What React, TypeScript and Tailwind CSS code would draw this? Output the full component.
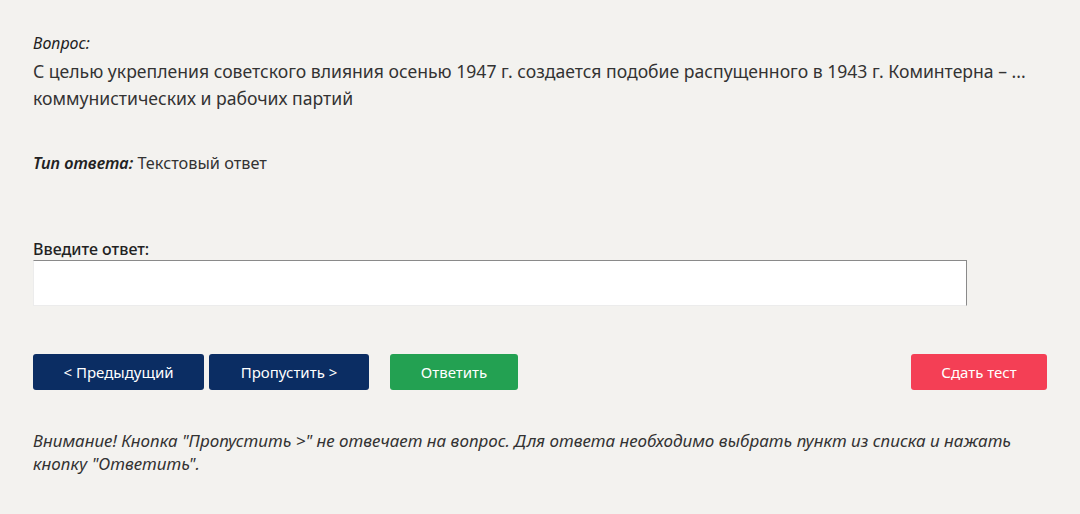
export default function App() {
  return (
    <div className="min-h-[514px] w-full bg-[#f3f2ef] text-[#222] font-['Noto_Sans',sans-serif]">
      <div className="px-[33px] pt-[32px]">
        <p className="text-[16px] italic leading-[22px]">Вопрос:</p>
        <p className="mt-[4px] text-[17.6px] leading-[27px] text-[#333]">
          С целью укрепления советского влияния осенью 1947 г. создается подобие распущенного в 1943 г. Коминтерна – ... коммунистических и рабочих партий
        </p>

        <p className="mt-[40px] text-[16.3px] leading-[22px] text-[#333]">
          <span className="font-semibold italic text-[#222]">Тип ответа:</span> Текстовый ответ
        </p>

        <p className="mt-[64px] text-[16px] font-medium leading-[22px]">Введите ответ:</p>
        <textarea className="block h-[46px] w-[934px] resize-none bg-white border-t border-r border-t-[#8a8a8a] border-r-[#8a8a8a] border-l border-b border-l-[#ececec] border-b-[#ececec] outline-none" />

        <div className="mt-[48px] flex items-center">
          <button className="h-[36px] w-[171px] rounded-[3px] bg-[#0b2d63] text-[15px] text-white">&lt; Предыдущий</button>
          <button className="ml-[5px] h-[36px] w-[160px] rounded-[3px] bg-[#0b2d63] text-[15px] text-white">Пропустить &gt;</button>
          <button className="ml-[21px] h-[36px] w-[128px] rounded-[3px] bg-[#23a152] text-[15px] text-white">Ответить</button>
          <button className="ml-auto h-[36px] w-[136px] rounded-[3px] bg-[#f43f55] text-[15px] text-white">Сдать тест</button>
        </div>

        <p className="mt-[39px] w-[1000px] text-[17px] italic leading-[23px] text-[#333]">
          Внимание! Кнопка "Пропустить &gt;" не отвечает на вопрос. Для ответа необходимо выбрать пункт из списка и нажать кнопку "Ответить".
        </p>
      </div>
    </div>
  );
}
